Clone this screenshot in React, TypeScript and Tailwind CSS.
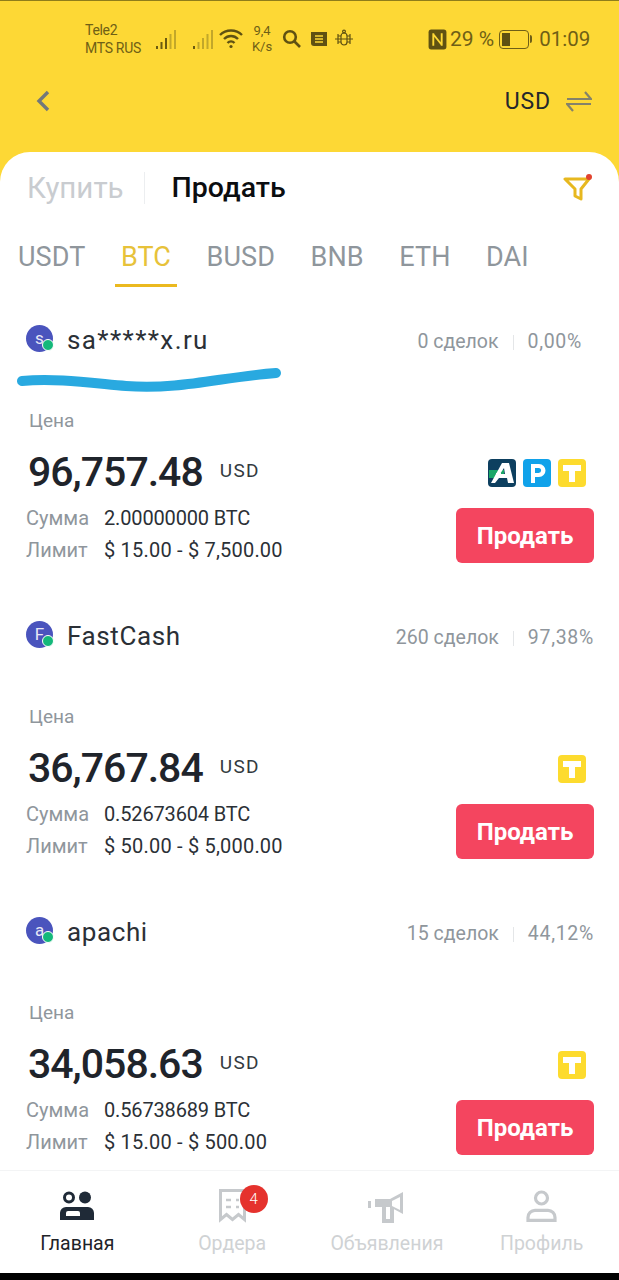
import React from "react";

const FONT = { fontFamily: "Roboto, 'Liberation Sans', sans-serif" };

function Bars({ strong }: { strong: number }) {
  const hs = [3, 7, 11, 15, 19];
  return (
    <svg width="22" height="20" viewBox="0 0 22 20" className="block">
      {hs.map((h, i) => (
        <rect key={i} x={i * 4.5} y={20 - h} width="2" height={h} fill={i < strong ? "#6b5a10" : "#c2a72a"} />
      ))}
    </svg>
  );
}

function StatusBar() {
  return (
    <div className="flex h-[50px] items-center pt-[26px] text-[#6f5f16]">
      <div className="ml-[85px] w-[64px] text-[14px] leading-[18px] tracking-[-0.3px]">
        <div>Tele2</div>
        <div>MTS RUS</div>
      </div>
      <div className="ml-[7px]"><Bars strong={3} /></div>
      <div className="ml-[15px]"><Bars strong={1} /></div>
      <svg width="26" height="24" viewBox="0 0 26 24" className="ml-[3px]" fill="none" stroke="#5f5112" strokeWidth="2.4">
        <path d="M2 8c6-6 16-6 22 0" />
        <path d="M6 12c4-4 10-4 14 0" />
        <path d="M9.5 16c2-2 5-2 7 0" />
        <circle cx="13" cy="19.5" r="1.6" fill="#5f5112" stroke="none" />
      </svg>
      <div className="ml-[6px] w-[24px] text-center text-[13px] leading-[16px]">
        <div>9,4</div>
        <div>K/s</div>
      </div>
      <svg width="20" height="20" viewBox="0 0 20 20" className="ml-[8px]" fill="none" stroke="#5f5112" strokeWidth="2.6">
        <circle cx="8" cy="8" r="5.8" />
        <path d="M12 12l6 6" />
      </svg>
      <svg width="18" height="16" viewBox="0 0 18 16" className="ml-[8px]">
        <path d="M1 1h16v14H4a3 3 0 0 1-3-3z" fill="#5f5112" />
        <path d="M5 5h8M5 8h8M5 11h8" stroke="#fdd835" strokeWidth="1.3" />
      </svg>
      <svg width="20" height="20" viewBox="0 0 20 20" className="ml-[6px]" fill="none" stroke="#5f5112" strokeWidth="1.2">
        <rect x="7" y="4" width="6" height="12" rx="3" />
        <circle cx="10" cy="2.5" r="1.4" />
        <path d="M7 7H4M7 10H1M7 13H4M13 7h3M13 10h6M13 13h3M4 5v10M16 5v10M7 10h6" />
      </svg>
      <svg width="19" height="21" viewBox="0 0 18 20" className="ml-[74px]">
        <rect x="0.5" y="0.5" width="17" height="19" rx="2.5" fill="#5f5112" />
        <path d="M5 4v12M13 4v12M5 5l8 10" stroke="#fdd835" strokeWidth="1.8" fill="none" />
      </svg>
      <span className="ml-[3px] text-[21px] leading-none">29 %</span>
      <div className="ml-[5px] flex items-center">
        <div className="flex h-[19px] w-[30px] rounded-[4px] border border-[#6f5f16] p-[2px]">
          <div className="w-[8px] bg-[#5f5112]" />
        </div>
        <div className="ml-[1px] h-[8px] w-[2px] rounded-r-sm bg-[#6f5f16]" />
      </div>
      <span className="ml-[7px] text-[20.5px] leading-none">01:09</span>
    </div>
  );
}

function NavRow() {
  return (
    <div className="flex h-[100px] items-center justify-between pl-[35px] pr-[27px]">
      <svg width="16" height="24" viewBox="0 0 16 24" fill="none" stroke="#73787a" strokeWidth="3.4">
        <path d="M13 3L4 12l9 9" />
      </svg>
      <div className="flex items-center gap-[15px]">
        <span className="text-[23px] leading-none tracking-[0.9px] text-[#24272c]">USD</span>
        <svg width="26" height="24" viewBox="0 0 26 24" fill="none" stroke="#84826a" strokeWidth="2.2">
          <path d="M1 10h24L19 3M25 15H1l6 7" />
        </svg>
      </div>
    </div>
  );
}

function ArtIcon() {
  return (
    <svg width="28" height="28" viewBox="0 0 28 28" className="block">
      <rect width="28" height="28" rx="4" fill="#0d3f5f" />
      <path d="M1 11h15v8H1z" fill="#1aa667" />
      <path d="M14 4h7l5 20h-6l-1-5h-8l-4 5H3zm2 5l-4 6h5z" fillRule="evenodd" fill="#ffffff" />
      <path d="M8 14h5v2H8z" fill="#ffffff" />
    </svg>
  );
}

function LetterIcon({ bg, shape }: { bg: string; shape: "P" | "T" }) {
  return (
    <svg width="28" height="28" viewBox="0 0 28 28" className="block">
      <rect width="28" height="28" rx="4" fill={bg} />
      {shape === "P" ? (
        <path fillRule="evenodd" d="M8 5h8a6.500 6.500 0 0 1 0 13h-4v6H8zm4 4v5h3.600a2.500 2.500 0 0 0 0-5z" fill="#fff" />
      ) : (
        <path d="M5 6h18v6h-6v11h-6V12H5z" fill="#fff" />
      )}
    </svg>
  );
}

type Offer = {
  letter: string;
  name: string;
  nameClass: string;
  deals: string;
  pct: string;
  pctClass: string;
  price: string;
  amount: string;
  limit: string;
  art?: boolean;
};

const offers: Offer[] = [
  { letter: "s", name: "sa*****x.ru", nameClass: "tracking-[1.4px]", deals: "0 сделок", pct: "0,00%", pctClass: "mr-[12px]", price: "96,757.48", amount: "2.00000000 BTC", limit: "$ 15.00 - $ 7,500.00", art: true },
  { letter: "F", name: "FastCash", nameClass: "tracking-[0.6px]", deals: "260 сделок", pct: "97,38%", pctClass: "", price: "36,767.84", amount: "0.52673604 BTC", limit: "$ 50.00 - $ 5,000.00" },
  { letter: "a", name: "apachi", nameClass: "tracking-[0.6px]", deals: "15 сделок", pct: "44,12%", pctClass: "", price: "34,058.63", amount: "0.56738689 BTC", limit: "$ 15.00 - $ 500.00" },
];

function OfferCard({ o }: { o: Offer }) {
  return (
    <div className="h-[296px] shrink-0 pl-[26px] pr-[25px]">
      <div className="flex h-[32px] items-center">
        <div className="relative -mt-[3px] flex h-[27px] w-[27px] items-center justify-center rounded-full bg-[#4a54bd] text-[17px] text-[#e8e8f6]">
          {o.letter}
          <div className="absolute bottom-[1px] right-[-1px] h-[12px] w-[12px] rounded-full border border-white bg-[#14b87a]" />
        </div>
        <span className={`ml-[14px] text-[26px] leading-none text-[#2b3036] ${o.nameClass}`}>{o.name}</span>
        <div className={`ml-auto mt-[4px] flex items-center text-[19.5px] leading-none text-[#8f969c] ${o.pctClass}`}>
          <span>{o.deals}</span>
          <span className="mx-[14px] h-[15px] w-px bg-[#e4e6e8]" />
          <span className="tracking-[0.7px]">{o.pct}</span>
        </div>
      </div>
      <div className="ml-[3px] mt-[53px] text-[19px] leading-[24px] text-[#8f969c]">Цена</div>
      <div className="mt-[14px] flex items-start justify-between">
        <div className="flex items-start">
          <span className="ml-[2px] text-[41px] font-medium leading-[50px] tracking-[-1px] text-[#1f242b]">{o.price}</span>
          <span className="ml-[17px] mt-[12px] text-[19px] leading-[24px] tracking-[1.4px] text-[#333a40]">USD</span>
        </div>
        <div className="mr-[8px] mt-[12px] flex gap-[7px]">
          {o.art && <ArtIcon />}
          {o.art && <LetterIcon bg="#10a2ea" shape="P" />}
          <LetterIcon bg="#fddb2e" shape="T" />
        </div>
      </div>
      <div className="flex items-start justify-between">
        <div className="mt-[5px] text-[20px] leading-[32px]">
          <div className="flex">
            <span className="w-[78px] text-[#8f969c]">Сумма</span>
            <span className="tracking-[-0.15px] text-[#2b3036]">{o.amount}</span>
          </div>
          <div className="flex">
            <span className="w-[78px] text-[#8f969c]">Лимит</span>
            <span className="tracking-[0.2px] text-[#2b3036]">{o.limit}</span>
          </div>
        </div>
        <button className="mt-[11px] h-[55px] w-[138px] rounded-[6px] bg-[#f4455f] text-[24px] font-bold leading-none text-white">
          Продать
        </button>
      </div>
    </div>
  );
}

function TabIcon({ name }: { name: string }) {
  if (name === "Главная") {
    return (
      <svg width="36" height="30" viewBox="0 0 36 30" className="block">
        <circle cx="10" cy="6.500" r="4.500" fill="none" stroke="#1f2a37" strokeWidth="3" />
        <circle cx="26" cy="6.500" r="6" fill="#1f2a37" />
        <path fillRule="evenodd" d="M1 29v-7a6 6 0 0 1 6-6h22a6 6 0 0 1 6 6v7zm6-4h14v-3a2 2 0 0 0-2-2H9a2 2 0 0 0-2 2z" fill="#1f2a37" />
      </svg>
    );
  }
  if (name === "Ордера") {
    return (
      <svg width="27" height="34" viewBox="0 0 27 34" className="block" fill="none" stroke="#c6c9cc" strokeWidth="3">
        <path d="M1.500 1.500h24v29l-6-5-6 5-6-5-6 5z" />
        <path d="M7 11h5M17 11h3M7 18h5M17 18h3" strokeWidth="2.500" />
      </svg>
    );
  }
  if (name === "Объявления") {
    return (
      <svg width="37" height="33" viewBox="0 0 37 33" className="block" fill="none" stroke="#c6c9cc">
        <path d="M1.500 11v7" strokeWidth="3" />
        <path d="M7 9h15L35 2v22l-13-7H7z" fill="#c6c9cc" stroke="none" />
        <path d="M16 17v14h8V17" strokeWidth="4" />
        <path d="M24 11v5l8 4V7z" fill="#ffffff" stroke="none" />
      </svg>
    );
  }
  return (
    <svg width="31" height="32" viewBox="0 0 31 32" className="block" fill="none" stroke="#c6c9cc" strokeWidth="3.200">
      <circle cx="15.500" cy="8" r="6" />
      <path d="M2 30.400v-3a7 7 0 0 1 7-7h13a7 7 0 0 1 7 7v3z" />
    </svg>
  );
}

function TabBar() {
  const tabs = [
    { name: "Главная", color: "text-[#1f2329]" },
    { name: "Ордера", color: "text-[#cfd2d4]", badge: "4" },
    { name: "Объявления", color: "text-[#cfd2d4]" },
    { name: "Профиль", color: "text-[#cfd2d4]" },
  ];
  return (
    <div className="grid h-[103px] shrink-0 grid-cols-4 border-t border-[#f3f4f5] bg-white pt-[16px]">
      {tabs.map((t) => (
        <div key={t.name} className="flex flex-col items-center">
          <div className="relative flex h-[38px] items-center justify-center">
            <TabIcon name={t.name} />
            {t.badge && (
              <div className="absolute left-[21px] top-[-2px] flex h-[28px] w-[28px] items-center justify-center rounded-full bg-[#e5322d] text-[15px] font-light text-white">
                {t.badge}
              </div>
            )}
          </div>
          <span className={`mt-[7px] text-[19.5px] leading-[24px] ${t.color}`}>{t.name}</span>
        </div>
      ))}
    </div>
  );
}

export default function App() {
  const currencies = ["USDT", "BTC", "BUSD", "BNB", "ETH", "DAI"];
  return (
    <div style={FONT} className="flex h-[1280px] w-[619px] flex-col overflow-hidden bg-[#fdd835]">
      <div className="h-px shrink-0 bg-[#8f7d1a]" />
      <div className="h-[151px] shrink-0">
        <StatusBar />
        <NavRow />
      </div>
      <div className="relative flex min-h-0 flex-1 flex-col rounded-t-[30px] bg-white">
        <div className="flex h-[72px] shrink-0 items-center pl-[27px] pr-[26px]">
          <span className="mt-[1px] text-[29.5px] leading-none text-[#c9ccd0]">Купить</span>
          <span className="ml-[20px] h-[32px] w-px bg-[#eceef0]" />
          <span className="ml-[27px] mt-[1px] text-[28.5px] font-medium leading-none text-[#0b0d10]">Продать</span>
          <svg width="30" height="32" viewBox="0 0 30 32" className="ml-auto" fill="none">
            <path d="M2 7h24l-8 10v10l-6-3v-7z" stroke="#e7b81f" strokeWidth="3" strokeLinejoin="round" />
            <circle cx="26" cy="5" r="3" fill="#e2432f" />
          </svg>
        </div>
        <div className="flex h-[62px] shrink-0 items-start gap-[35.5px] pl-[18px]">
          {currencies.map((c) => (
            <div key={c} className="relative pt-[17px]">
              <span className={`text-[27px] leading-[32px] tracking-[0.1px] ${c === "BTC" ? "text-[#e7c23a]" : "text-[#8f969c]"}`}>{c}</span>
              {c === "BTC" && <div className="absolute -left-[6px] -right-[6px] top-[60px] h-[3px] bg-[#ebb91f]" />}
            </div>
          ))}
        </div>
        <div className="mt-[38px] min-h-0 flex-1 overflow-hidden">
          {offers.map((o) => (
            <OfferCard key={o.name} o={o} />
          ))}
        </div>
        <svg width="270" height="28" viewBox="0 0 270 28" className="absolute left-[16px] top-[215px]" fill="none">
          <path d="M6 14C40 11 75 16 110 19C165 23 205 10 260 6" stroke="#29a9e0" strokeWidth="10" strokeLinecap="round" />
        </svg>
        <TabBar />
      </div>
      <div className="h-[7px] shrink-0 bg-black" />
    </div>
  );
}
